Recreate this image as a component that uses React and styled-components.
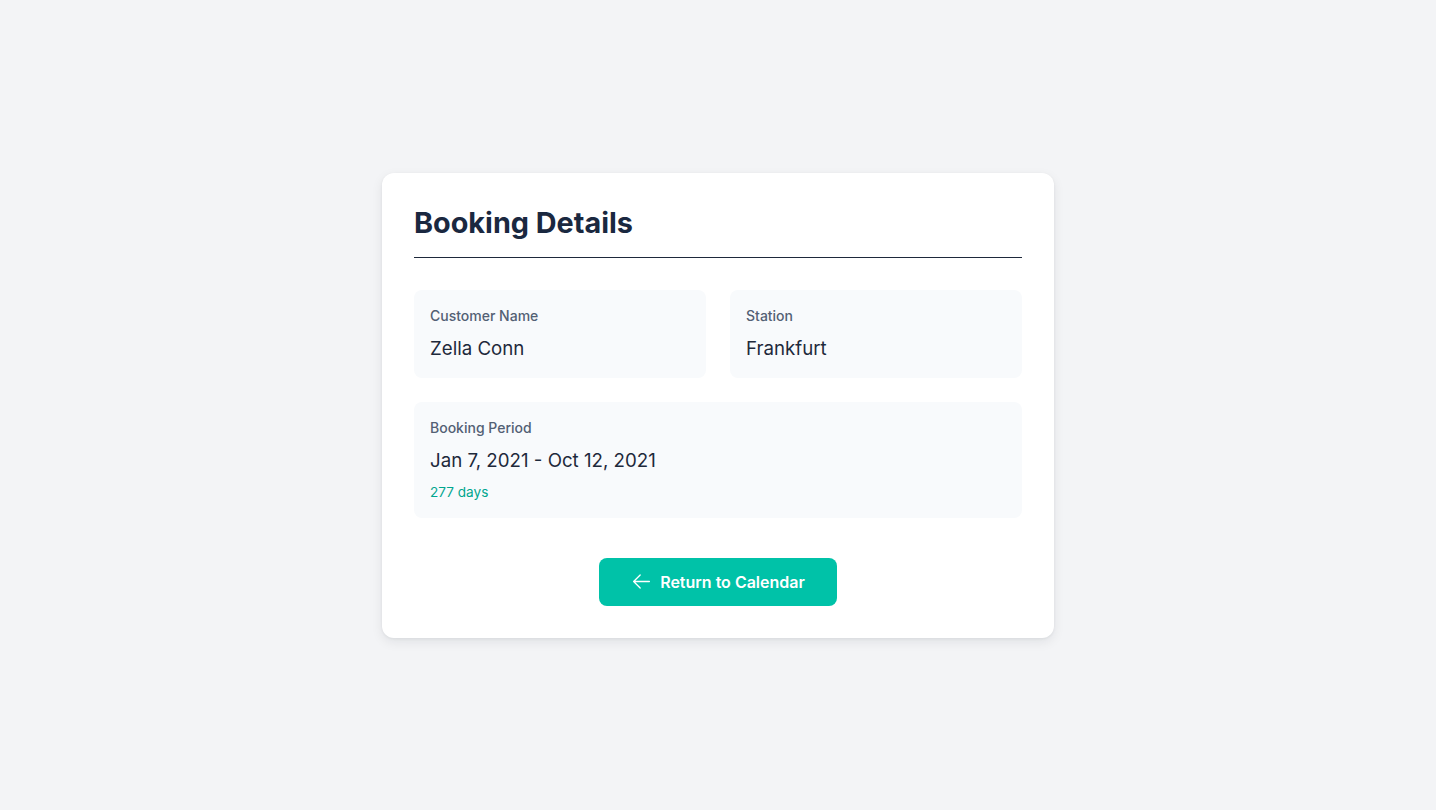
import styled, { createGlobalStyle } from 'styled-components'

const GlobalStyle = createGlobalStyle`
    html, body, #root {
        margin: 0;
        height: 100%;
    }
    body {
        background: #f3f4f6;
        font-family: Inter, "Noto Sans", sans-serif;
        -webkit-font-smoothing: antialiased;
    }
`

const booking = {
    customer: 'Zella Conn',
    station: 'Frankfurt',
    period: 'Jan 7, 2021 - Oct 12, 2021',
    days: 277,
}

const ArrowIcon = () => (
    <svg width="21" height="21" viewBox="0 0 24 24" fill="none" stroke="currentColor" strokeWidth="1.5" strokeLinecap="round" strokeLinejoin="round">
        <path d="M10.5 19.5 3 12m0 0 7.5-7.5M3 12h18" />
    </svg>
)

const App = () => {
    return (
        <Page>
            <GlobalStyle />
            <Card>
                <Title>Booking Details</Title>
                <Fields>
                    <Field>
                        <Label>Customer Name</Label>
                        <Value>{booking.customer}</Value>
                    </Field>
                    <Field>
                        <Label>Station</Label>
                        <Value>{booking.station}</Value>
                    </Field>
                    <Field $wide>
                        <Label>Booking Period</Label>
                        <Value>{booking.period}</Value>
                        <Days>{booking.days} days</Days>
                    </Field>
                </Fields>
                <Actions>
                    <ReturnButton>
                        <ArrowIcon />
                        Return to Calendar
                    </ReturnButton>
                </Actions>
            </Card>
        </Page>
    )
}

const Page = styled.div`
    min-height: 100%;
    display: flex;
    align-items: center;
    justify-content: center;
`

const Card = styled.div`
    width: 672px;
    box-sizing: border-box;
    padding: 32px;
    background: #ffffff;
    border-radius: 12px;
    box-shadow: 0 4px 12px rgba(15, 23, 42, 0.08), 0 1px 3px rgba(15, 23, 42, 0.06);
`

const Title = styled.h1`
    margin: 0 0 32px;
    padding-bottom: 16px;
    border-bottom: 1px solid #1e293b;
    font-size: 28.8px;
    line-height: 36px;
    font-weight: 700;
    color: #1a2840;
`

const Fields = styled.div`
    display: grid;
    grid-template-columns: 1fr 1fr;
    gap: 24px;
`

const Field = styled.div`
    grid-column: ${props => props.$wide ? '1 / -1' : 'auto'};
    padding: 16px;
    background: #f8fafc;
    border-radius: 8px;
`

const Label = styled.div`
    font-size: 14px;
    line-height: 20px;
    font-weight: 500;
    color: #536074;
`

const Value = styled.div`
    margin-top: 9px;
    font-size: 18.7px;
    line-height: 27px;
    color: #1e293b;
`

const Days = styled.div`
    margin-top: 8px;
    font-size: 13.6px;
    line-height: 20px;
    color: #00a68f;
`

const Actions = styled.div`
    display: flex;
    justify-content: center;
    margin-top: 40px;
`

const ReturnButton = styled.button`
    display: flex;
    align-items: center;
    gap: 8px;
    height: 48px;
    padding: 0 32px;
    border: none;
    border-radius: 8px;
    background: #00c2a8;
    color: #ffffff;
    font-family: inherit;
    font-size: 16px;
    font-weight: 600;
    cursor: pointer;
`

export default App
